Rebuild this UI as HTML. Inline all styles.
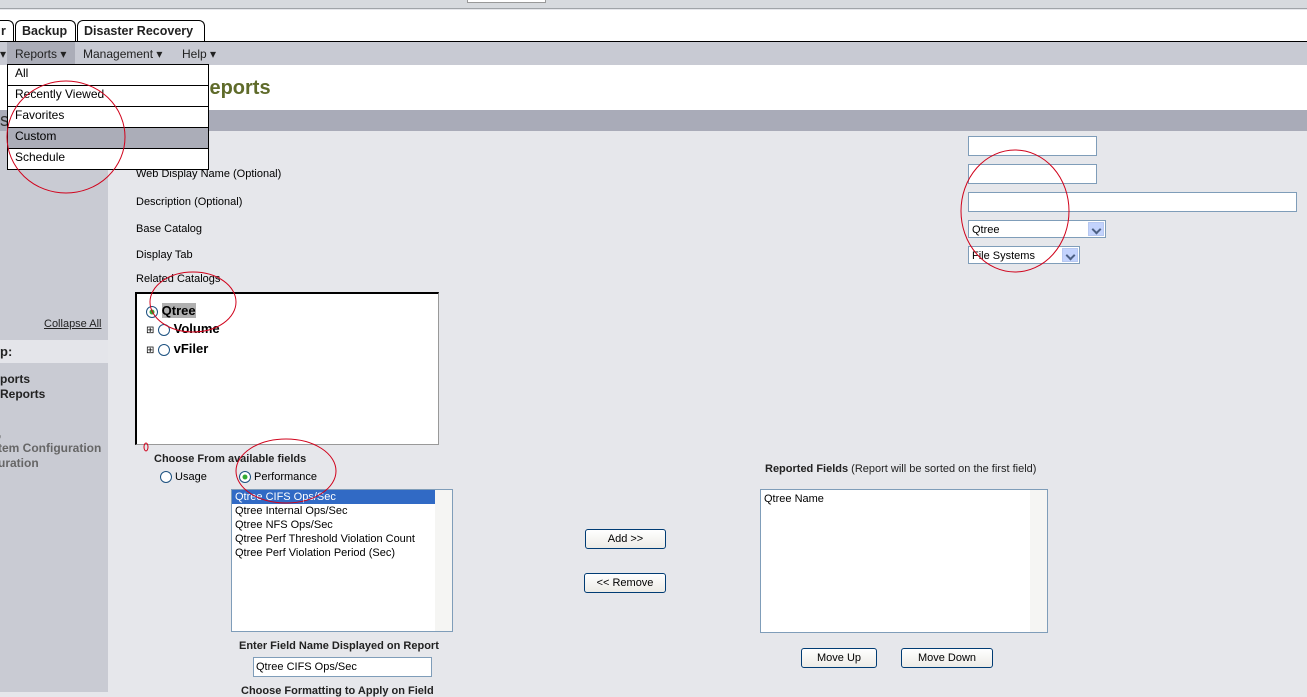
<!DOCTYPE html>
<html><head><meta charset="utf-8"><style>
*{box-sizing:border-box;margin:0;padding:0}
body{width:1307px;height:692px;overflow:hidden;position:relative;background:#e6e7eb;font-family:"Liberation Sans",Arial,sans-serif;font-size:11px;color:#000}
.a{position:absolute;white-space:nowrap}
.inp{position:absolute;background:#fff;border:1px solid #7f9db9}
.sel{position:absolute;background:#fff;border:1px solid #7f9db9;font-size:11px;padding:3px 3px}
.sel .ar{position:absolute;right:1px;top:1px;bottom:1px;width:16px;background:#c3d3fd;border:1px solid #b7c8f0}
.sel .ar:after{content:"";position:absolute;left:4px;top:3px;width:5px;height:5px;border-right:2px solid #4d6185;border-bottom:2px solid #4d6185;transform:rotate(45deg)}
.btn{position:absolute;background:linear-gradient(#fff,#ecebe6);border:1px solid #003c74;border-radius:3px;font-size:11px;text-align:center;line-height:18px}
.list{position:absolute;background:#fff;border:1px solid #7f9db9;font-size:11px}
.sb{position:absolute;right:0;top:0;bottom:0;width:17px;background:#f5f5f3}
.menu div{height:21px;border-bottom:1px solid #000;padding:1px 7px;font-size:12px}
.tab{position:absolute;top:20px;height:22px;background:#fff;border:1px solid #000;border-bottom:none;border-radius:6px 6px 0 0;font-weight:bold;font-size:12.5px;padding:3px 6px;color:#222;white-space:nowrap;overflow:hidden}
.nav span{position:absolute;top:5px;font-size:12px;color:#222;white-space:nowrap}
.rad{display:inline-block;width:12px;height:12px;border:1px solid #1c5180;border-radius:50%;background:#fff;vertical-align:middle}
</style></head><body>
<div class="a" style="left:0;top:0;width:1307px;height:9px;background:#d7dade;border-bottom:1px solid #a0a4a8"></div>
<div class="a" style="left:467px;top:0;width:79px;height:3px;background:#fff;border:1px solid #999;border-top:none"></div>
<div class="a" style="left:0;top:10px;width:1307px;height:31px;background:#fff"></div>
<div class="tab" style="left:-10px;width:24px;padding-left:10px">r</div>
<div class="tab" style="left:15px;width:61px">Backup</div>
<div class="tab" style="left:77px;width:128px">Disaster Recovery</div>
<div class="a nav" style="left:0;top:41px;width:1307px;height:24px;background:#c8cad3;border-top:1px solid #000">
<div class="a" style="left:7px;top:0;width:68px;height:23px;background:#abadb8"></div>
<span style="left:0">▾</span><span style="left:15px">Reports ▾</span><span style="left:83px">Management ▾</span><span style="left:182px">Help ▾</span></div>
<div class="a" style="left:0;top:65px;width:1307px;height:45px;background:#fff"></div>
<div class="a" style="left:195px;top:77px;font-size:20px;font-weight:bold;color:#5f6b2a">Reports</div>
<div class="a" style="left:0;top:110px;width:1307px;height:21px;background:#a9abb8"></div>
<div class="a" style="left:0;top:110px;font-size:18px;color:#333">s</div>
<div class="a" style="left:0;top:131px;width:108px;height:561px;background:#c9cbd3"></div>
<div class="a" style="left:44px;top:318px;text-decoration:underline;color:#222">Collapse All</div>
<div class="a" style="left:0;top:340px;width:108px;height:23px;background:#e4e5ea;font-weight:bold;font-size:13px;padding:4px 0;color:#222">p:</div>
<div class="a" style="left:0;top:372px;font-weight:bold;font-size:12px;line-height:15px;color:#222">ports<br>Reports</div>
<div class="a" style="left:-2px;top:426px;font-weight:bold;font-size:12px;line-height:15px;color:#666">,<br>tem Configuration<br>uration</div>
<div class="a menu" style="left:7px;top:64px;width:202px;background:#fff;border:1px solid #000;border-bottom:none">
<div>All</div><div>Recently Viewed</div><div>Favorites</div><div style="background:#abadb8">Custom</div><div>Schedule</div></div>
<div class="a" style="left:136px;top:168px">Web Display Name (Optional)</div>
<div class="a" style="left:136px;top:196px">Description (Optional)</div>
<div class="a" style="left:136px;top:223px">Base Catalog</div>
<div class="a" style="left:136px;top:249px">Display Tab</div>
<div class="a" style="left:136px;top:273px">Related Catalogs</div>
<div class="inp" style="left:968px;top:136px;width:129px;height:20px"></div>
<div class="inp" style="left:968px;top:164px;width:129px;height:20px"></div>
<div class="inp" style="left:968px;top:192px;width:329px;height:20px"></div>
<div class="sel" style="left:968px;top:220px;width:138px;height:18px">Qtree<div class="ar"></div></div>
<div class="sel" style="left:968px;top:246px;width:112px;height:18px">File Systems<div class="ar"></div></div>
<div class="a" style="left:135px;top:292px;width:304px;height:153px;background:#fff;border:2px solid #000;border-right:1px solid #999;border-bottom:1px solid #999"></div>
<div class="a" style="left:146px;top:303px;font-weight:bold;font-size:13px"><span class="rad" style="background:radial-gradient(#3a3 30%,#fff 40%)"></span> <span style="background:#b0b0b0">Qtree</span></div>
<div class="a" style="left:146px;top:321px;font-weight:bold;font-size:13px"><span style="font-size:10px;font-weight:normal">⊞</span> <span class="rad"></span> Volume</div>
<div class="a" style="left:146px;top:341px;font-weight:bold;font-size:13px"><span style="font-size:10px;font-weight:normal">⊞</span> <span class="rad"></span> vFiler</div>
<div class="a" style="left:154px;top:453px;font-weight:bold;color:#222">Choose From available fields</div>
<div class="a" style="left:160px;top:471px"><span class="rad"></span> Usage</div>
<div class="a" style="left:239px;top:471px"><span class="rad" style="background:radial-gradient(#3a3 30%,#fff 40%)"></span> Performance</div>
<div class="list" style="left:231px;top:489px;width:222px;height:143px">
<div style="background:#316ac5;color:#fff;padding:1px 3px;width:203px">Qtree CIFS Ops/Sec</div>
<div style="padding:0 3px;line-height:14px">Qtree Internal Ops/Sec<br>Qtree NFS Ops/Sec<br>Qtree Perf Threshold Violation Count<br>Qtree Perf Violation Period (Sec)</div><div class="sb"></div></div>
<div class="a" style="left:239px;top:640px;font-weight:bold;color:#222">Enter Field Name Displayed on Report</div>
<div class="inp" style="left:253px;top:657px;width:179px;height:20px;font-size:11px;padding:3px 2px">Qtree CIFS Ops/Sec</div>
<div class="a" style="left:241px;top:685px;font-weight:bold;color:#222">Choose Formatting to Apply on Field</div>
<div class="btn" style="left:585px;top:529px;width:81px;height:20px">Add &gt;&gt;</div>
<div class="btn" style="left:584px;top:573px;width:82px;height:20px">&lt;&lt; Remove</div>
<div class="a" style="left:765px;top:463px;color:#222"><b>Reported Fields</b> (Report will be sorted on the first field)</div>
<div class="list" style="left:760px;top:489px;width:288px;height:144px;padding:3px 3px">Qtree Name<div class="sb"></div></div>
<div class="btn" style="left:801px;top:648px;width:76px;height:20px">Move Up</div>
<div class="btn" style="left:901px;top:648px;width:92px;height:20px">Move Down</div>
<svg class="a" style="left:0;top:0" width="1307" height="692"><g fill="none" stroke="#d0021b" stroke-width="1">
<ellipse cx="66" cy="137" rx="59" ry="56"/><ellipse cx="193" cy="302" rx="43" ry="30"/><ellipse cx="1015" cy="211" rx="54" ry="61"/><ellipse cx="286" cy="471" rx="50" ry="32"/><ellipse cx="146" cy="447" rx="2" ry="4"/></g></svg>
</body></html>
